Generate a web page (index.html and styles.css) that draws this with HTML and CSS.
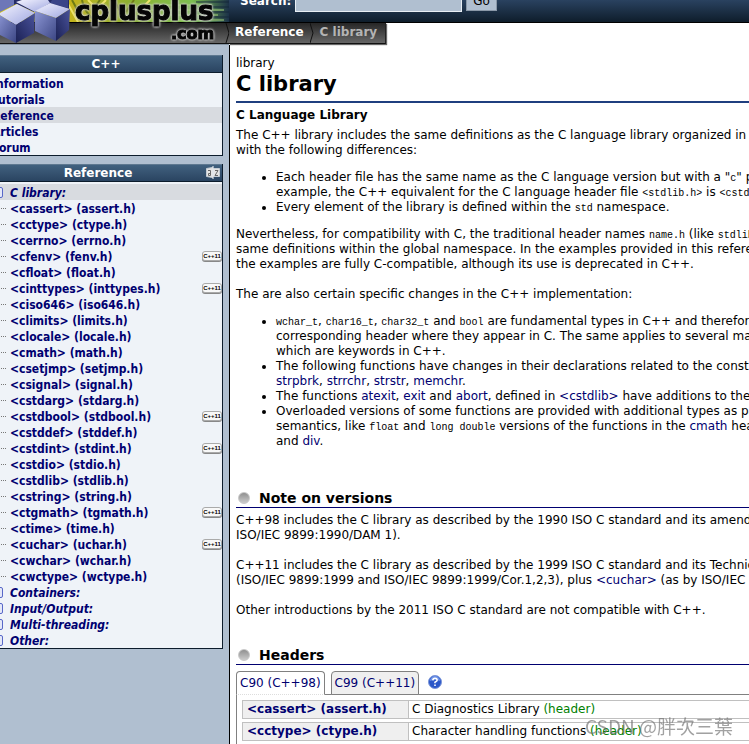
FILE: index.html
```html
<!DOCTYPE html>
<html lang="en">
<head>
  <meta charset="UTF-8" />
  <meta name="viewport" content="width=device-width, initial-scale=1.0"/>
  <title>C library - C++ Reference</title>
  <link rel="stylesheet" href="styles.css">
</head>
<body>
<div class="page">
  <!-- Header -->
  <header class="header">
    <a href="#" class="logo" aria-label="cplusplus.com">
      <svg viewBox="-16 0 245 46" width="245" height="46">
        <defs>
          <linearGradient id="leaf" x1="0" x2="1" y1="0" y2="0">
            <stop offset="0" stop-color="#d8c81c"/>
            <stop offset=".35" stop-color="#c4b41c"/>
            <stop offset=".6" stop-color="#8cb030"/>
            <stop offset=".85" stop-color="#7cc050"/>
            <stop offset="1" stop-color="#1b3148"/>
          </linearGradient>
          <linearGradient id="bar" x1="0" x2="0" y1="0" y2="1">
            <stop offset="0" stop-color="#262626"/>
            <stop offset="1" stop-color="#666"/>
          </linearGradient>
          <linearGradient id="faceTop" x1="0" x2="1" y1="0" y2="1">
            <stop offset="0" stop-color="#f4f4ff"/>
            <stop offset="1" stop-color="#9ea6e0"/>
          </linearGradient>
          <linearGradient id="faceLeft" x1="0" x2="1" y1="0" y2="1">
            <stop offset="0" stop-color="#8c96d4"/>
            <stop offset="1" stop-color="#3c4684"/>
          </linearGradient>
          <linearGradient id="faceRight" x1="0" x2="1" y1="1" y2="0">
            <stop offset="0" stop-color="#1b2154"/>
            <stop offset="1" stop-color="#4a539c"/>
          </linearGradient>
        </defs>
        <rect x="-16" y="0" width="245" height="23" fill="url(#leaf)"/>
        <g fill="none" stroke-width="2">
          <path stroke="#6d7a14" d="M72 0L84 22M82 0q2 12 14 22M100 0L94 8M114 0l12 22M134 0l-8 12"/>
          <path stroke="#efe468" d="M68 4l10 18M88 0l10 10M106 0l-6 6M150 0l-8 8"/>
          <path stroke="#a7d678" d="M140 5h72M150 10h74M160 15h58M170 20h54" stroke-width="1"/>
          <path stroke="#14283a" d="M196 2h33M204 7h25M212 12h17M206 17h23" stroke-width="1"/>
        </g>
        <rect x="-16" y="22" width="245" height="1" fill="#000"/>
        <rect x="-16" y="23" width="245" height="20" fill="url(#bar)"/>
        <rect x="-16" y="43" width="245" height="1" fill="#111"/>
        <rect x="-16" y="44" width="245" height="2" fill="#8494a4"/>
        <path d="M226 23l3 10-3 10" fill="none" stroke="#111"/>
        <!-- cubes -->
        <path fill="#252c66" d="M-16 0h85v9L50 4 34 12 16 4-16 18z"/>
        <path fill="#6d77b8" d="M0 0h14v5L0 12z"/>
        <path fill="url(#faceTop)" d="M16 2L22 0h26l2 3-15 9z"/>
        <path fill="#3a4488" d="M52 0h16v8L50 3z"/>
        <path fill="url(#faceTop)" d="M-2 14L17 4l18 9-19 12z"/>
        <path fill="url(#faceLeft)" d="M-2 14l18 11v18L-2 34z"/>
        <path fill="url(#faceRight)" d="M16 25l19-12-1 20-18 10z"/>
        <path fill="url(#faceTop)" d="M35 11l15-8 20 6-14 9z"/>
        <path fill="url(#faceLeft)" d="M35 11l21 7v23l-21-10z"/>
        <path fill="url(#faceRight)" d="M56 18l14-9-1 21-13 11z"/>
        <g class="logo-text">
          <text x="75" y="20" font-size="26">cplusplus</text>
          <text x="171" y="39" font-size="16">.com</text>
        </g>
      </svg>
    </a>
    <div class="header-right">
      <form class="search" onsubmit="event.preventDefault();">
        <label for="search">Search:</label>
        <input type="text" id="search" name="q">
        <button type="submit">Go</button>
      </form>
      <nav class="crumbs">
        <a href="#">Reference</a>
        <svg viewBox="0 0 4 20" width="4" height="20"><path d="M0 0l3 10-3 10" fill="none" stroke="#111"/></svg>
        <a href="#" class="current">C library</a>
      </nav>
    </div>
  </header>

  <div class="columns">
    <!-- Left menus -->
    <aside class="sidebar">
      <section class="box">
        <h3>C++</h3>
        <ul class="menu">
          <li><a href="#">Information</a></li>
          <li><a href="#">Tutorials</a></li>
          <li class="selected"><a href="#">Reference</a></li>
          <li><a href="#">Articles</a></li>
          <li><a href="#">Forum</a></li>
        </ul>
      </section>
      <section class="box">
        <h3 class="with-icon">Reference
          <svg class="az" viewBox="0 0 14 13" width="14" height="13">
            <path fill="#e4e4e4" stroke="#c4ccd4" d="M.5 2.500l6-1v10l-6-1zM7.500 2.500h6v8h-6z"/>
            <path fill="none" stroke="#666" d="M2 4.500h2.500v5H2.500v-2h2M9 4.500h3l-3 5h3"/>
            <path fill="none" stroke="#fff" d="M7 0v13"/>
          </svg>
        </h3>
        <ul class="menu">
          <li class="group selected"><a href="#">C library:</a></li>
          <li class="leaf"><a href="#">&lt;cassert&gt; (assert.h)</a></li>
          <li class="leaf"><a href="#">&lt;cctype&gt; (ctype.h)</a></li>
          <li class="leaf"><a href="#">&lt;cerrno&gt; (errno.h)</a></li>
          <li class="leaf"><a href="#">&lt;cfenv&gt; (fenv.h)</a><span class="badge">C++11</span></li>
          <li class="leaf"><a href="#">&lt;cfloat&gt; (float.h)</a></li>
          <li class="leaf"><a href="#">&lt;cinttypes&gt; (inttypes.h)</a><span class="badge">C++11</span></li>
          <li class="leaf"><a href="#">&lt;ciso646&gt; (iso646.h)</a></li>
          <li class="leaf"><a href="#">&lt;climits&gt; (limits.h)</a></li>
          <li class="leaf"><a href="#">&lt;clocale&gt; (locale.h)</a></li>
          <li class="leaf"><a href="#">&lt;cmath&gt; (math.h)</a></li>
          <li class="leaf"><a href="#">&lt;csetjmp&gt; (setjmp.h)</a></li>
          <li class="leaf"><a href="#">&lt;csignal&gt; (signal.h)</a></li>
          <li class="leaf"><a href="#">&lt;cstdarg&gt; (stdarg.h)</a></li>
          <li class="leaf"><a href="#">&lt;cstdbool&gt; (stdbool.h)</a><span class="badge">C++11</span></li>
          <li class="leaf"><a href="#">&lt;cstddef&gt; (stddef.h)</a></li>
          <li class="leaf"><a href="#">&lt;cstdint&gt; (stdint.h)</a><span class="badge">C++11</span></li>
          <li class="leaf"><a href="#">&lt;cstdio&gt; (stdio.h)</a></li>
          <li class="leaf"><a href="#">&lt;cstdlib&gt; (stdlib.h)</a></li>
          <li class="leaf"><a href="#">&lt;cstring&gt; (string.h)</a></li>
          <li class="leaf"><a href="#">&lt;ctgmath&gt; (tgmath.h)</a><span class="badge">C++11</span></li>
          <li class="leaf"><a href="#">&lt;ctime&gt; (time.h)</a></li>
          <li class="leaf"><a href="#">&lt;cuchar&gt; (uchar.h)</a><span class="badge">C++11</span></li>
          <li class="leaf"><a href="#">&lt;cwchar&gt; (wchar.h)</a></li>
          <li class="leaf"><a href="#">&lt;cwctype&gt; (wctype.h)</a></li>
          <li class="group"><a href="#">Containers:</a></li>
          <li class="group"><a href="#">Input/Output:</a></li>
          <li class="group"><a href="#">Multi-threading:</a></li>
          <li class="group"><a href="#">Other:</a></li>
        </ul>
      </section>
    </aside>

    <!-- Article -->
    <main class="content">
      <div class="kind">library</div>
      <h1>C library</h1>
      <section class="part">
        <div class="tagline">C Language Library</div>
        <p>The C++ library includes the same definitions as the C language library organized in<br>
        with the following differences:</p>
        <ul>
          <li>Each header file has the same name as the C language version but with a "<code>c</code>" prefix<br>
          example, the C++ equivalent for the C language header file <code>&lt;stdlib.h&gt;</code> is <code>&lt;cstdlib&gt;</code></li>
          <li>Every element of the library is defined within the <code>std</code> namespace.</li>
        </ul>
        <p>Nevertheless, for compatibility with C, the traditional header names <code>name.h</code> (like <code>stdlib.h</code><br>
        same definitions within the global namespace. In the examples provided in this reference<br>
        the examples are fully C-compatible, although its use is deprecated in C++.</p>
        <p>The are also certain specific changes in the C++ implementation:</p>
        <ul>
          <li><code>wchar_t</code>, <code>char16_t</code>, <code>char32_t</code> and <code>bool</code> are fundamental types in C++ and therefore<br>
          corresponding header where they appear in C. The same applies to several macros<br>
          which are keywords in C++.</li>
          <li>The following functions have changes in their declarations related to the constness<br>
          <a href="#">strpbrk</a>, <a href="#">strrchr</a>, <a href="#">strstr</a>, <a href="#">memchr</a>.</li>
          <li>The functions <a href="#">atexit</a>, <a href="#">exit</a> and <a href="#">abort</a>, defined in <a href="#">&lt;cstdlib&gt;</a> have additions to their</li>
          <li>Overloaded versions of some functions are provided with additional types as parameters<br>
          semantics, like <code>float</code> and <code>long double</code> versions of the functions in the <a href="#">cmath</a> header<br>
          and <a href="#">div</a>.</li>
        </ul>
      </section>

      <section class="part">
        <h2>Note on versions</h2>
        <p>C++98 includes the C library as described by the 1990 ISO C standard and its amendment<br>
        ISO/IEC 9899:1990/DAM 1).</p>
        <p>C++11 includes the C library as described by the 1999 ISO C standard and its Technical<br>
        (ISO/IEC 9899:1999 and ISO/IEC 9899:1999/Cor.1,2,3), plus <a href="#">&lt;cuchar&gt;</a> (as by ISO/IEC</p>
        <p>Other introductions by the 2011 ISO C standard are not compatible with C++.</p>
      </section>

      <section class="part">
        <h2>Headers</h2>
        <div class="tabs">
          <button type="button" class="tab active">C90 (C++98)</button>
          <button type="button" class="tab">C99 (C++11)</button>
          <svg class="help" viewBox="0 0 14 14" width="14" height="14">
            <circle cx="7" cy="7" r="6.500" fill="#2b57c8" stroke="#7d97d8"/>
            <path d="M2 6a5 5 0 0 1 10 0q-5-2-10 0" fill="#6f93e6"/>
            <path d="M4.800 5.300Q5 3.300 7 3.300t2.200 1.700Q9.200 6.200 7 7.300v1M7 9.500v1.600" fill="none" stroke="#fff" stroke-width="1.600"/>
          </svg>
        </div>
        <div class="tab-panel">
          <table>
            <tr><th scope="row"><a href="#">&lt;cassert&gt; (assert.h)</a></th><td>C Diagnostics Library <span class="type">(header)</span></td></tr>
            <tr><th scope="row"><a href="#">&lt;cctype&gt; (ctype.h)</a></th><td>Character handling functions <span class="type">(header)</span></td></tr>
          </table>
        </div>
      </section>
    </main>
  </div>
</div>
<div class="watermark">CSDN @胖次三葉</div>
</body>
</html>
```
FILE: styles.css
```css
:root {
  --navy: #000070;
  --steel: #b0bfd0;
  --ink: #0c1c2c;
  --pale: #eff3f8;
}
* { box-sizing: border-box; margin: 0; padding: 0; }
body {
  overflow: hidden;
  background: #fff;
  color: #000;
  font: 12px/15px "DejaVu Sans", Verdana, sans-serif;
}
a { color: var(--navy); text-decoration: none; }
a:hover { text-decoration: underline; }

.page {
  display: flex; flex-direction: column;
  height: 100vh;
  margin-left: -16px;
  overflow: hidden;
}

/* header */
.header { display: flex; height: 45px; flex: none; }
.logo, .logo svg { display: block; flex: none; }
.logo-text {
  font-family: "DejaVu Sans", sans-serif; font-weight: bold;
  fill: #050505; stroke: #050505; stroke-width: 1px;
  filter: drop-shadow(0 0 1px #ddd) drop-shadow(0 0 1px #bbb);
}
.header-right { flex: 1; min-width: 0; }
.search {
  display: flex; align-items: flex-end; gap: 4px;
  height: 23px; padding: 0 0 10px 11px;
  background: linear-gradient(#2a4260, #0e1d2b);
  border-bottom: 1px solid #000;
}
.search label { width: 51px; color: #fff; font-weight: bold; line-height: 22px; }
.search input {
  width: 167px; height: 20px;
  border: 1px solid #e8eef4; border-top-color: #808890; background: var(--steel);
}
.search button {
  width: 31px; height: 20px; margin-bottom: 1px;
  border: 1px solid #8a98a8; background: var(--steel);
  font: 12px/15px "DejaVu Sans", sans-serif;
}
.crumbs {
  display: inline-flex; gap: 6px;
  height: 21px; padding: 0 8px 0 6px;
  background: linear-gradient(#262626, #666);
  border-right: 1px solid #222; border-bottom: 1px solid #111;
  box-shadow: 1px 1px 1px #666;
}
.crumbs a { color: #fff; font-weight: bold; line-height: 18px; }
.crumbs .current { color: #b4b4b4; }

/* columns */
.columns { display: flex; flex: 1; min-height: 0; }
.sidebar {
  width: 246px; flex: none;
  padding: 10px 6px 0 6px;
  background: var(--steel);
  border-right: 1px solid #000;
}
.box {
  margin-bottom: 8px;
  background: var(--pale);
  border: solid var(--ink); border-width: 0 1px 1px 0;
}
.box h3 {
  position: relative;
  height: 18px; margin-bottom: 2px;
  background: linear-gradient(#41617f, #2a4461);
  border-top: 1px solid #5e7890; border-bottom: 1px solid var(--ink);
  color: #fff; font-size: 12px; line-height: 16px; text-align: center;
}
.box .with-icon { padding-right: 16px; }
.az { position: absolute; right: 2px; top: 1px; }
.menu {
  list-style: none;
  font-family: "DejaVu Sans Condensed", "DejaVu Sans", Tahoma, sans-serif; font-weight: bold;
}
.menu li { display: flex; align-items: center; height: 16px; padding-left: 2px; line-height: 16px; }
.menu a { padding-top: 1px; }
.menu .selected { background: #d8dbe0; }
.group { font-style: italic; }
.group:before {
  content: ''; width: 10px; height: 9px; margin: 0 7px 0 -1px;
  border: 1px solid #5868c8; border-radius: 2px; background: #e4e8f8;
}
.leaf:before { content: ''; width: 14px; margin-right: 4px; border-top: 1px dotted #777; }
.badge {
  margin-left: auto; width: 20px; height: 10px;
  border: 1px solid #aaa; border-radius: 3px; background: #f8f8f8;
  box-shadow: 0 1px 0 #888;
  color: #000; font: bold 6px/8px "Liberation Sans", sans-serif; text-align: center;
}

/* article */
.content { flex: 1; min-width: 0; padding: 11px 0 0 6px; white-space: nowrap; }
h1 { font-size: 21px; line-height: 26px; padding-bottom: 4px; border-bottom: 2px solid #1f3f7f; }
h1 + .part { padding-top: 5px; }
.part { padding-bottom: 28px; }
.tagline { margin-bottom: 5px; font-weight: bold; }
.content p + p { margin-top: 15px; }
.content ul { margin: 12px 0; padding-left: 40px; }
code { font: 10px/12px "Liberation Mono", monospace; }
h2 {
  display: flex; align-items: center; gap: 9px;
  margin-bottom: 5px; padding-left: 2px;
  border-bottom: 1px solid var(--navy);
  font-size: 14px; line-height: 18px;
}
h2:before {
  content: ''; width: 10px; height: 10px;
  border: 1px solid #c8c8c8; border-radius: 50%;
  background: linear-gradient(#909090, #ccc);
}

.tabs { display: flex; align-items: center; gap: 6px; }
.tab {
  height: 24px; padding: 0 3px; margin: 1px 0 -1px;
  background: #efefef;
  border: 1px solid #808080; border-radius: 4px 4px 0 0;
  color: var(--navy); font: 12px/15px "DejaVu Sans", sans-serif;
}
.tab.active { background: #fff; border-bottom: 1px dotted #ddd; z-index: 1; }
.help { margin-left: 3px; }
.tab-panel { padding: 2px 0 0 5px; border: solid #808080; border-width: 1px 0 0 1px; min-height: 100px; }
table { width: 100%; border-spacing: 0 3px; }
th, td { height: 19px; border: 1px solid #c0c0c0; text-align: left; line-height: 15px; }
th { width: 167px; padding: 0 4px; background: #efefef; }
td { padding: 0 3px; border-left: 0; border-right: 0; }
.type { color: #008000; }

.watermark {
  position: fixed; right: 16px; bottom: 4px;
  color: rgba(110, 110, 110, .65);
  font: 19px/28px "Noto Sans CJK TC", sans-serif;
}
```
